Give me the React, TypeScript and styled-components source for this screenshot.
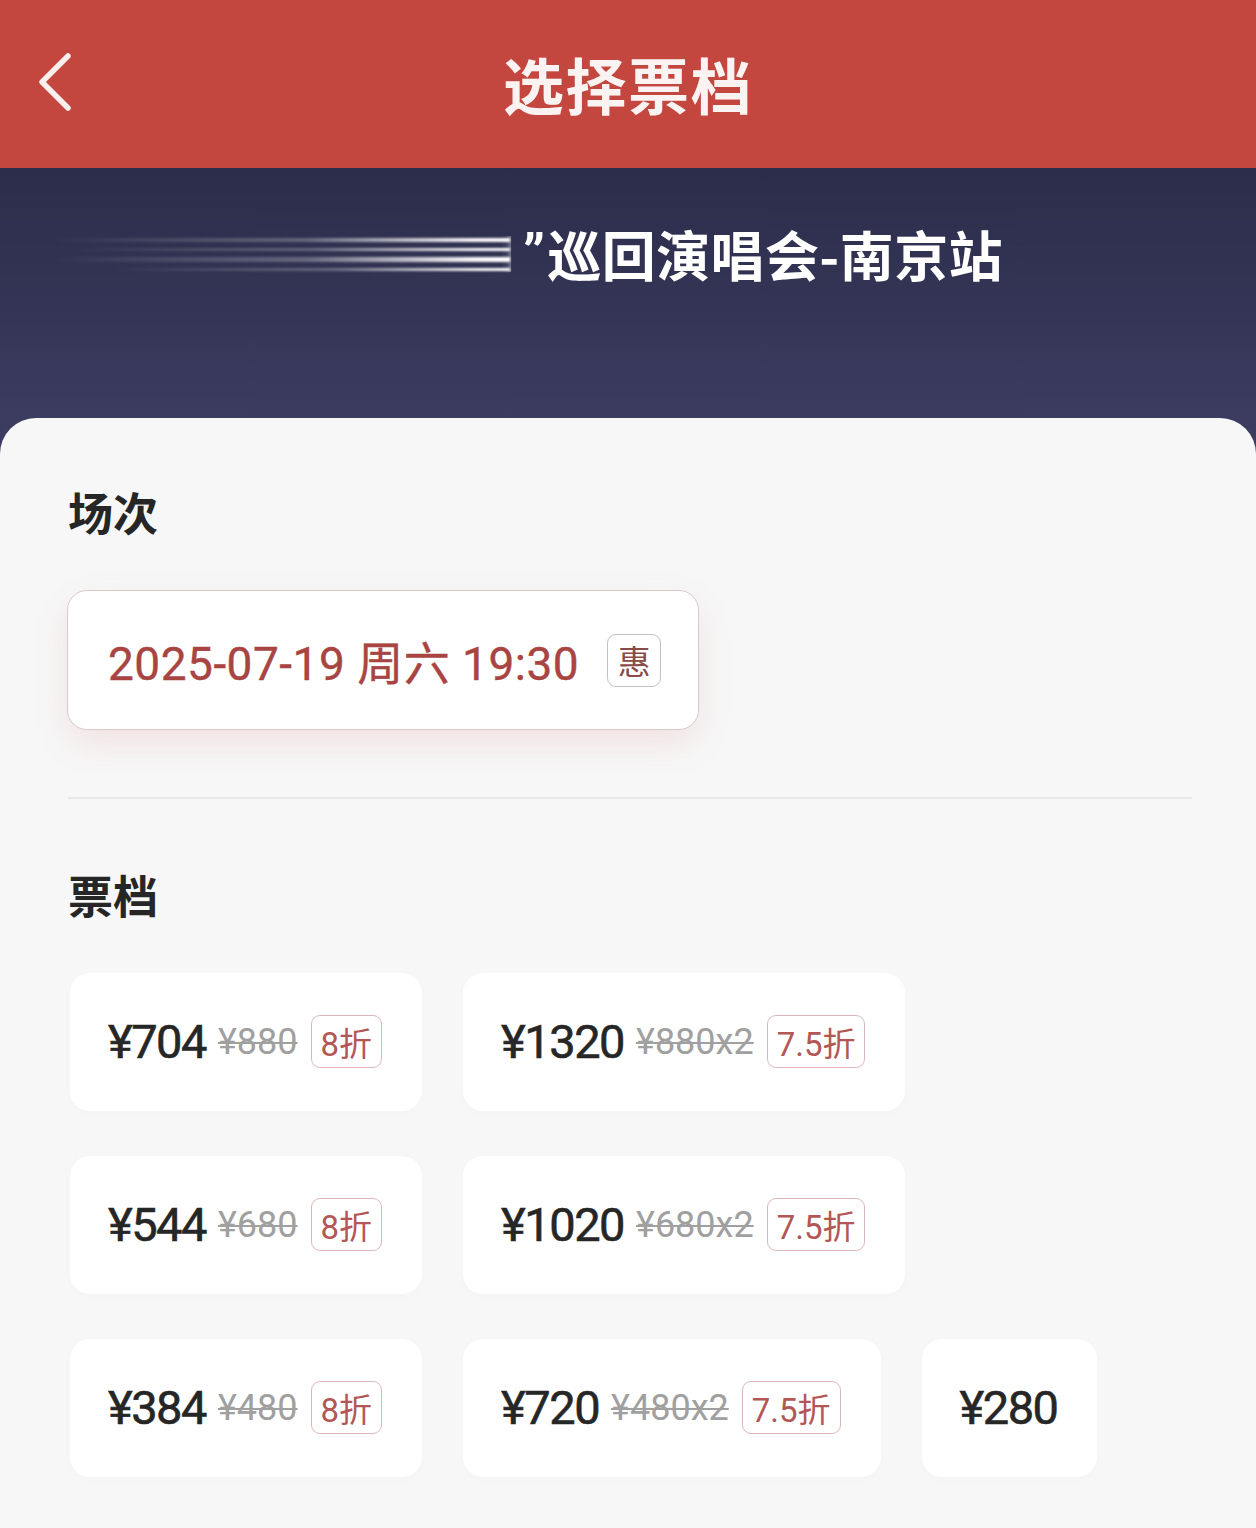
import React from "react";
import styled, { createGlobalStyle } from "styled-components";

const Global = createGlobalStyle`
  html, body { margin: 0; padding: 0; background: #f7f7f7; }
  body { font-family: Roboto, "Noto Sans CJK SC", "Noto Sans", sans-serif; }
  * { box-sizing: border-box; }
`;

const Page = styled.div`
  width: 1256px;
  min-height: 1528px;
  background: #f7f7f7;
  overflow: hidden;
`;

const Header = styled.header`
  height: 168px;
  background: #c3463f;
  display: flex;
  align-items: center;
  justify-content: center;
  position: relative;
`;

const BackButton = styled.button`
  position: absolute;
  left: 30px;
  top: 48px;
  width: 48px;
  height: 68px;
  border: 0;
  background: transparent;
  padding: 0;
  display: flex;
  align-items: center;
  justify-content: center;
`;

const Title = styled.h1`
  margin: 0;
  color: #fbf3f2;
  font-family: "Noto Sans CJK SC", sans-serif;
  font-weight: 700;
  font-size: 61px;
  letter-spacing: 1.5px;
  line-height: 1;
  margin-top: -2px;
`;

const Hero = styled.section`
  height: 290px;
  background: linear-gradient(180deg, #2c2d4a 0%, #3d3e63 100%);
  display: flex;
  align-items: flex-start;
  padding: 56px 0 0 55px;
`;

const HeroRow = styled.div`
  display: flex;
  align-items: center;
  height: 60px;
`;

const Quote = styled.span`
  font-family: Roboto, sans-serif;
  font-weight: 700;
  margin: 0 2px 0 8px;
`;

const EventTitle = styled.div`
  color: #ffffff;
  font-family: "Noto Sans CJK SC", sans-serif;
  font-weight: 700;
  font-size: 54px;
  line-height: 60px;
  letter-spacing: 0.4px;
  display: flex;
  align-items: center;
  white-space: nowrap;
`;

const Sheet = styled.main`
  margin-top: -40px;
  background: #f7f7f7;
  border-radius: 36px 36px 0 0;
  padding: 64px 64px 60px 68px;
  position: relative;
`;

const SectionTitle = styled.h2`
  margin: 0;
  font-family: "Noto Sans CJK SC", sans-serif;
  font-size: 45px;
  line-height: 60px;
  font-weight: 700;
  color: #262626;
`;

const SessionBox = styled.div`
  margin-top: 48px;
  margin-left: -1px;
  display: inline-flex;
  align-items: center;
  gap: 28px;
  width: 632px;
  height: 140px;
  padding: 0 38px 0 40px;
  background: #ffffff;
  border: 1.5px solid #d9c9c9;
  border-radius: 20px;
  box-shadow: 0 14px 34px rgba(205, 90, 90, 0.13);
`;

const SessionText = styled.span`
  color: #a84543;
  font-family: Roboto, "Noto Sans CJK SC", sans-serif;
  font-size: 46px;
  letter-spacing: 0.5px;
  font-weight: 400;
  -webkit-text-stroke: 0.4px #a84543;
  white-space: nowrap;
`;

const Tag = styled.span<{ $tone?: "red" | "gray" }>`
  display: inline-flex;
  align-items: center;
  justify-content: center;
  height: 53px;
  min-width: 54px;
  padding: 0 9px;
  border-radius: 9px;
  border: 1.5px solid ${(p) => (p.$tone === "gray" ? "#c8c0c0" : "#dcb8b8")};
  background: #ffffff;
  color: ${(p) => (p.$tone === "gray" ? "#8a4a4a" : "#b35656")};
  font-family: Roboto, "Noto Sans CJK SC", sans-serif;
  font-size: 33px;
  letter-spacing: 0px;
  white-space: nowrap;
`;

const Divider = styled.hr`
  margin: 67px 0 0 0;
  border: 0;
  height: 1.5px;
  background: #e8e8e8;
  width: 1124px;
`;

const TierTitle = styled(SectionTitle)`
  margin-top: 66px;
`;

const TicketGrid = styled.div`
  margin-top: 48px;
  display: flex;
  flex-wrap: wrap;
  column-gap: 41px;
  row-gap: 45px;
  width: 1124px;
  margin-left: 2px;
`;

const TicketCard = styled.div`
  height: 138px;
  display: inline-flex;
  align-items: center;
  gap: 12px;
  padding: 0 40px 0 38px;
  background: #ffffff;
  border-radius: 20px;
  box-shadow: 0 2px 10px rgba(0, 0, 0, 0.015);
`;

const Price = styled.span`
  color: #262626;
  font-family: Roboto, sans-serif;
  font-size: 47px;
  letter-spacing: -1.5px;
  font-weight: 400;
  -webkit-text-stroke: 0.6px #262626;
  white-space: nowrap;
`;

const Original = styled.span`
  color: #a0a0a0;
  font-family: Roboto, sans-serif;
  font-size: 36px;
  letter-spacing: 0px;
  text-decoration: line-through;
  text-decoration-thickness: 2px;
  white-space: nowrap;
  margin-right: 1px;
`;

function Chevron() {
  return (
    <svg width="40" height="64" viewBox="0 0 40 64" fill="none">
      <polyline
        points="34,6 8,32 34,58"
        stroke="#fbefee"
        strokeWidth="5.5"
        strokeLinecap="round"
        strokeLinejoin="round"
      />
    </svg>
  );
}

function Streaks() {
  return (
    <svg width="460" height="60" viewBox="0 0 460 60">
      <defs>
        <linearGradient id="sg" x1="0" x2="1" y1="0" y2="0">
          <stop offset="0" stopColor="#ffffff" stopOpacity="0" />
          <stop offset="0.55" stopColor="#ffffff" stopOpacity="0.25" />
          <stop offset="0.92" stopColor="#ffffff" stopOpacity="0.95" />
          <stop offset="1" stopColor="#ffffff" stopOpacity="1" />
        </linearGradient>
        <filter id="bl" x="-5%" y="-50%" width="110%" height="200%">
          <feGaussianBlur stdDeviation="1.3" />
        </filter>
      </defs>
      <g filter="url(#bl)">
        <rect x="0" y="14" width="455" height="4" fill="url(#sg)" />
        <rect x="20" y="24" width="435" height="3" fill="url(#sg)" />
        <rect x="0" y="33" width="455" height="5" fill="url(#sg)" />
        <rect x="60" y="44" width="395" height="3" fill="url(#sg)" />
      </g>
      <rect x="446" y="12" width="10" height="36" fill="url(#sg)" opacity="0.3" />
    </svg>
  );
}

type Ticket = { price: string; original?: string; discount?: string };

const tickets: Ticket[] = [
  { price: "¥704", original: "¥880", discount: "8折" },
  { price: "¥1320", original: "¥880x2", discount: "7.5折" },
  { price: "¥544", original: "¥680", discount: "8折" },
  { price: "¥1020", original: "¥680x2", discount: "7.5折" },
  { price: "¥384", original: "¥480", discount: "8折" },
  { price: "¥720", original: "¥480x2", discount: "7.5折" },
  { price: "¥280" },
];

export default function App() {
  return (
    <Page>
      <Global />
      <Header>
        <BackButton aria-label="返回">
          <Chevron />
        </BackButton>
        <Title>选择票档</Title>
      </Header>
      <Hero>
        <HeroRow>
          <Streaks />
          <EventTitle>
            <Quote>”</Quote>
            <span>巡回演唱会-南京站</span>
          </EventTitle>
        </HeroRow>
      </Hero>
      <Sheet>
        <SectionTitle>场次</SectionTitle>
        <SessionBox>
          <SessionText>2025-07-19 周六 19:30</SessionText>
          <Tag $tone="gray">惠</Tag>
        </SessionBox>
        <Divider />
        <TierTitle>票档</TierTitle>
        <TicketGrid>
          {tickets.map((t) => (
            <TicketCard key={t.price}>
              <Price>{t.price}</Price>
              {t.original && <Original>{t.original}</Original>}
              {t.discount && <Tag>{t.discount}</Tag>}
            </TicketCard>
          ))}
        </TicketGrid>
      </Sheet>
    </Page>
  );
}
